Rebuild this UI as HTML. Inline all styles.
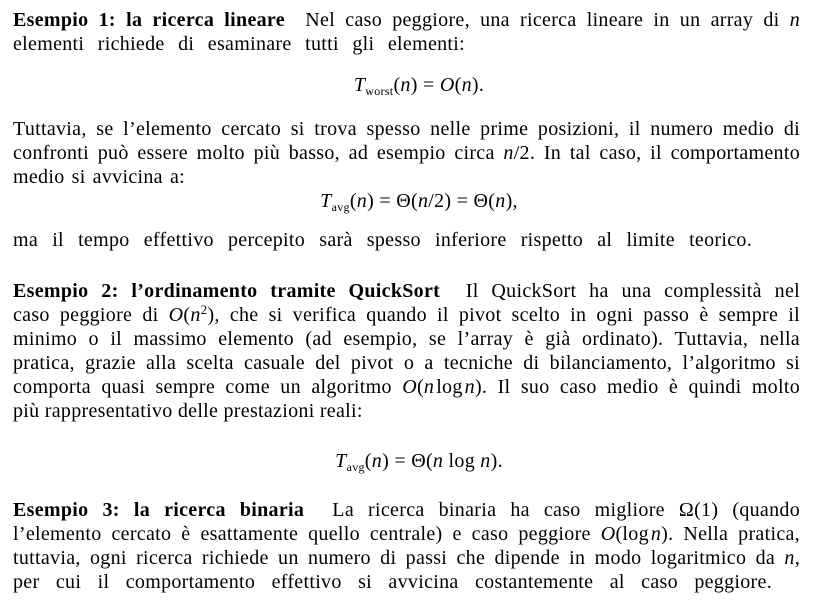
<!DOCTYPE html>
<html><head><meta charset="utf-8"><style>
body{margin:0;width:838px;height:601px;background:#fff;overflow:hidden;font-family:"Liberation Serif",serif;color:#000;}
.l{position:absolute;left:13px;height:24px;line-height:24px;font-size:20px;letter-spacing:0.3px;white-space:nowrap;text-align:justify;text-align-last:justify;}
.f{position:absolute;left:0;width:838px;text-align:center;font-size:20px;line-height:24px;letter-spacing:0.3px;}
i{font-style:italic}
sub{font-size:12px;vertical-align:-4px;font-style:normal;line-height:0}
sup{font-size:13px;line-height:0;vertical-align:7px}
b{font-weight:bold}
</style></head><body>
<div class="l" style="top:8px;width:787px"><b>Esempio 1: la ricerca lineare</b>&nbsp; Nel caso peggiore, una ricerca lineare in un array di <i>n</i></div>
<div class="l" style="top:32px;width:452px">elementi richiede di esaminare tutti gli elementi:</div>
<div class="f" style="top:73px"><i>T</i><sub>worst</sub>(<i>n</i>) = <i>O</i>(<i>n</i>).</div>
<div class="l" style="top:117px;width:787px">Tuttavia, se l’elemento cercato si trova spesso nelle prime posizioni, il numero medio di</div>
<div class="l" style="top:141px;width:787px">confronti può essere molto più basso, ad esempio circa <i>n</i>/2. In tal caso, il comportamento</div>
<div class="l" style="top:165px;width:172px">medio si avvicina a:</div>
<div class="f" style="top:189px"><i>T</i><sub>avg</sub>(<i>n</i>) = Θ(<i>n</i>/2) = Θ(<i>n</i>),</div>
<div class="l" style="top:228px;width:739px">ma il tempo effettivo percepito sarà spesso inferiore rispetto al limite teorico.</div>
<div class="l" style="top:279px;width:787px"><b>Esempio 2: l’ordinamento tramite QuickSort</b>&nbsp; Il QuickSort ha una complessità nel</div>
<div class="l" style="top:303px;width:787px">caso peggiore di <i>O</i>(<i>n</i><sup>2</sup>), che si verifica quando il pivot scelto in ogni passo è sempre il</div>
<div class="l" style="top:327px;width:787px">minimo o il massimo elemento (ad esempio, se l’array è già ordinato). Tuttavia, nella</div>
<div class="l" style="top:351px;width:787px">pratica, grazie alla scelta casuale del pivot o a tecniche di bilanciamento, l’algoritmo si</div>
<div class="l" style="top:375px;width:787px">comporta quasi sempre come un algoritmo <i>O</i>(<i>n</i>&#8202;log&#8202;<i>n</i>). Il suo caso medio è quindi molto</div>
<div class="l" style="top:399px;width:328px">più rappresentativo delle prestazioni reali:</div>
<div class="f" style="top:449px"><i>T</i><sub>avg</sub>(<i>n</i>) = Θ(<i>n</i> log <i>n</i>).</div>
<div class="l" style="top:498px;width:787px"><b>Esempio 3: la ricerca binaria</b>&nbsp; La ricerca binaria ha caso migliore Ω(1) (quando</div>
<div class="l" style="top:522px;width:787px">l’elemento cercato è esattamente quello centrale) e caso peggiore <i>O</i>(log&#8202;<i>n</i>). Nella pratica,</div>
<div class="l" style="top:546px;width:787px">tuttavia, ogni ricerca richiede un numero di passi che dipende in modo logaritmico da <i>n</i>,</div>
<div class="l" style="top:570px;width:759px">per cui il comportamento effettivo si avvicina costantemente al caso peggiore.</div>
</body></html>
